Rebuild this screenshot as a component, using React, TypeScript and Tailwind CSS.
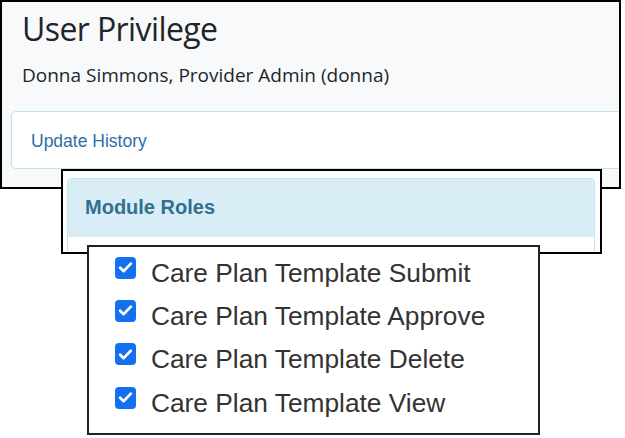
import React from "react";

const items = [
  "Care Plan Template Submit",
  "Care Plan Template Approve",
  "Care Plan Template Delete",
  "Care Plan Template View",
];

function Check() {
  return (
    <span className="w-[21px] h-[22px] shrink-0 rounded-[4px] bg-[#1570ef] flex items-center justify-center -mt-[3px]">
      <svg width="15" height="13" viewBox="0 0 14 12" fill="none">
        <path d="M2 6.2 L5.3 9.4 L12 2.4" stroke="white" strokeWidth="2.6" strokeLinecap="round" strokeLinejoin="round" />
      </svg>
    </span>
  );
}

export default function App() {
  return (
    <div className="relative w-[625px] h-[438px] bg-white overflow-hidden">
      {/* Panel 1 */}
      <div className="w-[621px] h-[189px] border-2 border-black bg-[#f8f9fa] overflow-hidden">
        <div className="pl-[20px] pt-[11px]" style={{ fontFamily: '"Open Sans", sans-serif' }}>
          <h1 className="text-[32px] leading-none tracking-[-0.6px] text-[#212529] whitespace-nowrap">User Privilege</h1>
          <p className="mt-[21.4px] text-[19px] leading-none text-[#212529] whitespace-nowrap">
            Donna Simmons, Provider Admin (donna)
          </p>
        </div>
        <div className="ml-[9px] mt-[26px] w-[640px] h-[58px] border border-[#bee5eb] rounded-[5px] bg-white pl-[19px] pt-[16.7px]">
          <span
            className="text-[17.5px] leading-none text-[#2f6ea7] whitespace-nowrap"
            style={{ fontFamily: '"Liberation Sans", Arial, sans-serif' }}
          >
            Update History
          </span>
        </div>
      </div>

      {/* Panel 2 */}
      <div className="absolute left-[61px] top-[169px] w-[541px] h-[85px] border-2 border-black bg-white overflow-hidden pl-[4px] pr-[5px] pt-[7px]">
        <div className="h-[100px] border border-[#bce8f1] rounded-t-[4px] overflow-hidden">
          <div className="h-[58px] bg-[#d9edf7] pl-[17px] pt-[17.4px]">
            <span
              className="text-[20px] leading-none font-bold text-[#31708f] whitespace-nowrap"
              style={{ fontFamily: '"Liberation Sans", Arial, sans-serif' }}
            >
              Module Roles
            </span>
          </div>
        </div>
      </div>

      {/* Panel 3 */}
      <div
        className="absolute left-[87px] top-[245px] w-[453px] h-[190px] border-2 border-[#222] bg-white pl-[26px] pt-[12.6px] flex flex-col"
        style={{ fontFamily: '"Liberation Sans", Arial, sans-serif' }}
      >
        {items.map((t) => (
          <div key={t} className="h-[44px] flex items-start gap-[15px]">
            <Check />
            <span className="text-[26.3px] leading-none text-[#333] whitespace-nowrap">{t}</span>
          </div>
        ))}
      </div>
    </div>
  );
}
